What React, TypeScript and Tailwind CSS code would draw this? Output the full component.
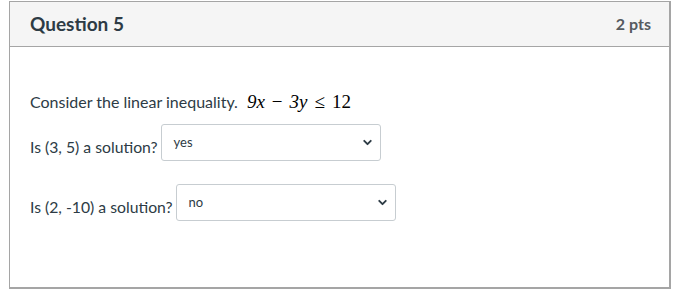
import { ChevronDown } from 'lucide-react';

function Choice({ label, value }: { label: string; value: string }) {
    return (
        <div className="flex items-end">
            <span className="mb-[4px] mr-[3px] text-[15.75px] leading-[20px]">{label}</span>
            <div className="flex h-[37px] w-[220px] items-start justify-between rounded-[3px] border border-[#c7cdd1] bg-white pl-[12px] pr-[6px] pt-[9px]">
                <span className="text-[13px] leading-[16px] text-[#2d3b45]">{value}</span>
                <ChevronDown className="mt-[2px] h-[13px] w-[13px] text-[#2d3b45]" strokeWidth={3.5} />
            </div>
        </div>
    );
}

export default function App() {
    return (
        <div className="h-[289px] w-[683px] bg-white pl-[9px] pt-px font-['Lato','Open_Sans',sans-serif] text-[#2d3b45]">
            <div className="h-[288px] w-[662px] border-2 border-[#a5a5a5] border-t border-l">
                <div className="flex h-[45px] items-center justify-between border-b border-[#a5a5a5] bg-[#f5f5f5] pl-[20px] pr-[18px]">
                    <span className="text-[19px] font-bold">Question 5</span>
                    <span className="text-[16px] font-bold text-[#565b5f]">2 pts</span>
                </div>
                <div className="pl-[20px] pt-[45px]">
                    <p className="flex items-baseline text-[16px] leading-[20px]">
                        Consider the linear inequality.
                        <span className="ml-[9px] font-['Liberation_Serif','DejaVu_Serif',serif] text-[19px] text-black">
                            <i>9x</i>
                            <span className="mx-[7px]">−</span>
                            <i>3y</i>
                            <span className="mx-[7px]">≤</span>
                            12
                        </span>
                    </p>
                    <div className="mt-[12px] flex flex-col gap-[23px]">
                        <Choice label="Is (3, 5) a solution?" value="yes" />
                        <Choice label="Is (2, -10) a solution?" value="no" />
                    </div>
                </div>
            </div>
        </div>
    );
}
